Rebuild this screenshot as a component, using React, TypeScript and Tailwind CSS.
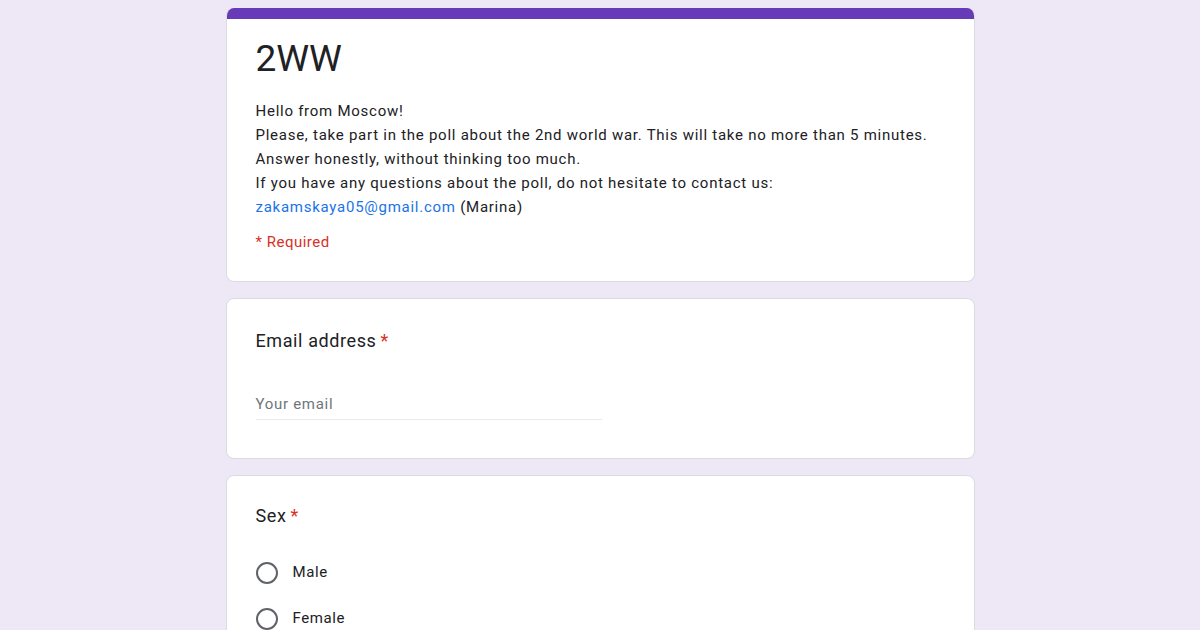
import React from "react";

const Radio = ({ label }: { label: string }) => (
  <label className="flex items-center h-[46px]">
    <span className="w-[22px] h-[22px] rounded-full border-2 border-[#5f6368] shrink-0" />
    <span className="ml-[15px] text-[15px] tracking-[0.6px] text-[#202124]">{label}</span>
  </label>
);

const Required = () => <span className="text-[#d93025] ml-1">*</span>;

export default function App() {
  return (
    <div className="w-full bg-[#ede7f6] font-['Roboto',sans-serif] overflow-hidden h-[630px]">
      <div className="w-[749px] mx-auto pt-2 flex flex-col gap-4">
        {/* header card */}
        <div className="bg-white rounded-lg border border-[#dadce0] border-t-0 overflow-hidden">
          <div className="h-[11px] bg-[#673ab7]" />
          <div className="px-[29px] pt-[16px] pb-[27px]">
            <h1 className="text-[37px] leading-[48px] text-[#202124]">2WW</h1>
            <div className="mt-[16px] text-[15px] leading-6 tracking-[0.74px] text-[#202124]">
              <p>Hello from Moscow!</p>
              <p>Please, take part in the poll about the 2nd world war. This will take no more than 5 minutes.</p>
              <p>Answer honestly, without thinking too much.</p>
              <p>If you have any questions about the poll, do not hesitate to contact us:</p>
              <p>
                <a className="text-[#1a73e8]">zakamskaya05@gmail.com</a> (Marina)
              </p>
            </div>
            <p className="mt-3 text-[15px] tracking-[0.5px] text-[#d93025]">* Required</p>
          </div>
        </div>

        {/* email */}
        <div className="bg-white rounded-lg border border-[#dadce0] px-[29px] pt-[30px] pb-[38px]">
          <p className="text-[18px] leading-6 tracking-[0.6px] text-[#202124]">
            Email address<Required />
          </p>
          <div className="mt-[39px] w-[346px] border-b border-[#e8eaed] pb-[3px]">
            <span className="text-[15px] tracking-[0.7px] text-[#70757a]">Your email</span>
          </div>
        </div>

        {/* sex */}
        <div className="bg-white rounded-lg border border-[#dadce0] px-[29px] pt-[28px] pb-6">
          <p className="text-[18px] leading-6 tracking-[0.6px] text-[#202124]">
            Sex<Required />
          </p>
          <div className="mt-[22px] flex flex-col">
            <Radio label="Male" />
            <Radio label="Female" />
          </div>
        </div>
      </div>
    </div>
  );
}
